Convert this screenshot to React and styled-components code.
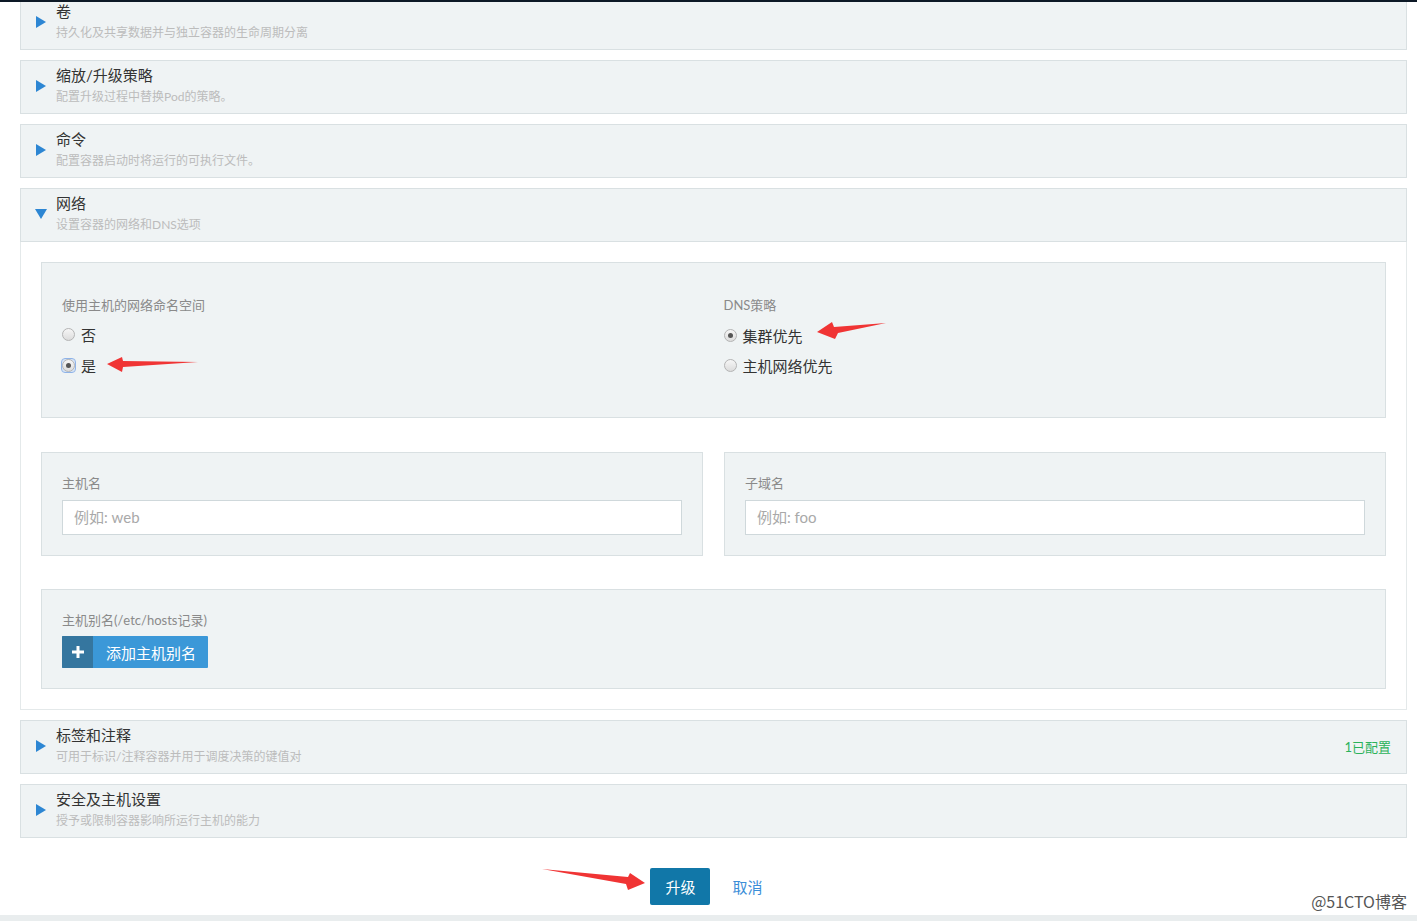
import React from 'react';
import styled, { createGlobalStyle } from 'styled-components';

const GlobalStyle = createGlobalStyle`
  html, body {
    margin: 0;
    padding: 0;
    background: #fff;
    overflow: hidden;
  }
  body {
    font-family: Lato, "Noto Sans CJK SC", "Noto Sans", sans-serif;
    color: #333;
  }
`

const Page = styled.div`
  position: relative;
  width: 1417px;
  height: 921px;
  overflow: hidden;
  display: flow-root;
`

const TopBar = styled.div`
  position: absolute;
  top: 0;
  left: 0;
  right: 0;
  height: 2px;
  background: #0d1926;
  z-index: 2;
`

const List = styled.div`
  display: flex;
  flex-direction: column;
  gap: 10px;
  margin: -4px 10px 0 20px;
`

const Panel = styled.div`
  display: flex;
  flex-direction: column;
`

const Header = styled.div`
  display: flex;
  align-items: center;
  background: #eff3f4;
  border: 1px solid #d9e0e2;
  padding: 4px 15px 6px 15px;
  gap: 10px;
`

const Caret = styled.span`
  width: 0;
  height: 0;
  flex: none;
  ${p => p.$open ? `
    border-left: 6px solid transparent;
    border-right: 6px solid transparent;
    border-top: 10px solid #2d86d3;
    margin-left: -1px;
    margin-right: -1px;
  ` : `
    border-top: 6px solid transparent;
    border-bottom: 6px solid transparent;
    border-left: 10px solid #2d86d3;
  `}
`

const HeaderText = styled.div`
  display: flex;
  flex-direction: column;
  flex: 1;
`

const Title = styled.div`
  font-size: 15px;
  line-height: 20px;
  color: #333;
`

const Sub = styled.div`
  font-size: 12px;
  line-height: 20px;
  margin-top: 2px;
  color: #bcbcbc;
`

const Status = styled.div`
  font-size: 13px;
  color: #2bb25a;
`

const Body = styled.div`
  border: 1px solid #e4e9ea;
  border-top: none;
  padding: 20px;
  display: flex;
  flex-direction: column;
`

const Box = styled.div`
  background: #eff3f4;
  border: 1px solid #d9e0e2;
  padding: ${p => p.$pad || '20px'};
  margin-top: ${p => p.$mt || '0'};
`

const TwoCols = styled.div`
  display: grid;
  grid-template-columns: 1fr 1fr;
  column-gap: ${p => p.$gap || '20px'};
  margin-top: ${p => p.$mt || '0'};
`

const Col = styled.div`
  display: flex;
  flex-direction: column;
`

const Label = styled.div`
  font-size: 13px;
  line-height: 20px;
  color: #8a8a8a;
`

const RadioRow = styled.label`
  display: flex;
  align-items: center;
  gap: 6px;
  height: 20px;
  margin-top: ${p => p.$mt || '10px'};
  font-size: 15px;
  color: #333;
`

const RadioWrap = styled.span`
  display: flex;
  align-items: center;
  justify-content: center;
  width: 13px;
  height: 13px;
  flex: none;
  border-radius: 3px;
  ${p => p.$focus && `
    outline: 1px solid #8fb3e8;
    outline-offset: 0px;
    background: #d7e5f8;
  `}
`

const RadioDot = styled.span`
  width: 11px;
  height: 11px;
  border-radius: 50%;
  border: 1px solid #b4b4b4;
  background: linear-gradient(#f6f6f6, #dcdcdc);
  display: flex;
  align-items: center;
  justify-content: center;
  &::after {
    content: '';
    width: 5px;
    height: 5px;
    border-radius: 50%;
    background: ${p => p.$checked ? '#555' : 'transparent'};
  }
`

const Input = styled.input`
  margin-top: 7px;
  height: 35px;
  box-sizing: border-box;
  border: 1px solid #cfd8db;
  background: #fff;
  padding: 0 11px 2px;
  font-family: inherit;
  font-size: 15px;
  color: #333;
  outline: none;
  &::placeholder {
    color: #a9a9a9;
  }
`

const AddButton = styled.button`
  margin-top: 6px;
  align-self: flex-start;
  display: flex;
  height: 32px;
  padding: 0;
  border: none;
  background: #3b98d8;
  color: #fff;
  font-family: inherit;
  font-size: 15px;
  border-radius: 1px;
  overflow: hidden;
`

const AddIcon = styled.span`
  width: 31px;
  height: 100%;
  background: #35769f;
  display: flex;
  align-items: center;
  justify-content: center;
`

const AddText = styled.span`
  display: flex;
  align-items: center;
  padding: 0 12px 0 13px;
`

const Actions = styled.div`
  display: flex;
  justify-content: center;
  align-items: center;
  gap: 12px;
  margin-top: 30px;
  padding-left: 6px;
`

const PrimaryBtn = styled.button`
  width: 60px;
  height: 37px;
  border: none;
  border-radius: 2px;
  background: #1177a8;
  color: #fff;
  font-family: inherit;
  font-size: 15px;
`

const LinkBtn = styled.button`
  border: none;
  background: none;
  padding: 0 10px;
  height: 37px;
  color: #3a8ed8;
  font-family: inherit;
  font-size: 15px;
`

const BottomStrip = styled.div`
  margin-top: 10px;
  height: 10px;
  background: #e9edee;
`

const Watermark = styled.div`
  position: absolute;
  right: 10px;
  top: 889px;
  font-size: 16px;
  color: #555;
  font-family: "Noto Sans CJK SC", sans-serif;
`

const Arrows = styled.svg`
  position: absolute;
  top: 0;
  left: 0;
  pointer-events: none;
`

const PanelHeader = ({ title, sub, open, status }) => (
  <Header>
    <Caret $open={open} />
    <HeaderText>
      <Title>{title}</Title>
      <Sub>{sub}</Sub>
    </HeaderText>
    {status && <Status>{status}</Status>}
  </Header>
)

const Radio = ({ label, checked, focus, mt }) => (
  <RadioRow $mt={mt}>
    <RadioWrap $focus={focus}>
      <RadioDot $checked={checked} />
    </RadioWrap>
    {label}
  </RadioRow>
)

export default function App() {
  return (
    <Page>
      <GlobalStyle />
      <TopBar />
      <List>
        <Panel>
          <PanelHeader title="卷" sub="持久化及共享数据并与独立容器的生命周期分离" />
        </Panel>
        <Panel>
          <PanelHeader title="缩放/升级策略" sub="配置升级过程中替换Pod的策略。" />
        </Panel>
        <Panel>
          <PanelHeader title="命令" sub="配置容器启动时将运行的可执行文件。" />
        </Panel>
        <Panel>
          <PanelHeader open title="网络" sub="设置容器的网络和DNS选项" />
          <Body>
            <Box $pad="32px 20px 42px">
              <TwoCols>
                <Col>
                  <Label>使用主机的网络命名空间</Label>
                  <Radio label="否" mt="9px" />
                  <Radio label="是" checked focus mt="11px" />
                </Col>
                <Col>
                  <Label>DNS策略</Label>
                  <Radio label="集群优先" checked />
                  <Radio label="主机网络优先" />
                </Col>
              </TwoCols>
            </Box>
            <TwoCols $gap="21px" $mt="34px">
              <Box>
                <Col>
                  <Label>主机名</Label>
                  <Input placeholder="例如: web" />
                </Col>
              </Box>
              <Box>
                <Col>
                  <Label>子域名</Label>
                  <Input placeholder="例如: foo" />
                </Col>
              </Box>
            </TwoCols>
            <Box $mt="33px">
              <Col>
                <Label>主机别名(/etc/hosts记录)</Label>
                <AddButton>
                  <AddIcon>
                    <svg width="12" height="12" viewBox="0 0 12 12">
                      <rect x="4.5" y="0" width="3" height="12" fill="#fff" />
                      <rect x="0" y="4.5" width="12" height="3" fill="#fff" />
                    </svg>
                  </AddIcon>
                  <AddText>添加主机别名</AddText>
                </AddButton>
              </Col>
            </Box>
          </Body>
        </Panel>
        <Panel>
          <PanelHeader title="标签和注释" sub="可用于标识/注释容器并用于调度决策的键值对" status="1已配置" />
        </Panel>
        <Panel>
          <PanelHeader title="安全及主机设置" sub="授予或限制容器影响所运行主机的能力" />
        </Panel>
      </List>
      <Actions>
        <PrimaryBtn>升级</PrimaryBtn>
        <LinkBtn>取消</LinkBtn>
      </Actions>
      <BottomStrip />
      <Watermark>@51CTO博客</Watermark>
      <Arrows width="1417" height="921" viewBox="0 0 1417 921">
        <polygon points="107,364 122,357 123,361 198,362 123,367 122,372" fill="#f03434" />
        <polygon points="817,332 832,322 834,327 886,323 838,333 835,339" fill="#f03434" />
        <polygon points="542,869 628,877 630,873 645,883 628,890 626,884" fill="#f03434" />
      </Arrows>
    </Page>
  );
}
